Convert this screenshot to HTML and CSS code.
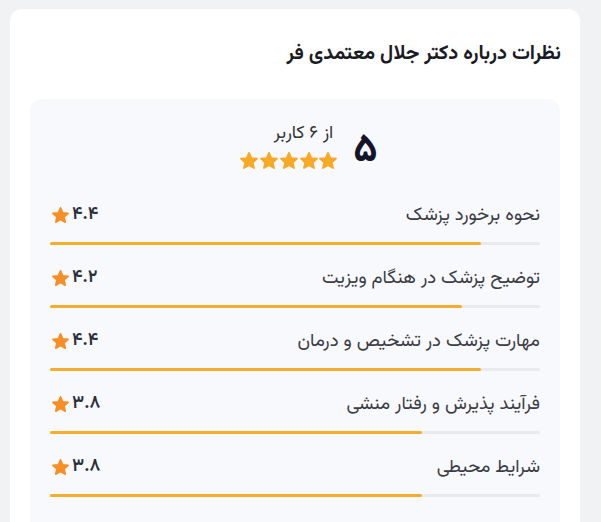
FILE: index.html
```html
<!DOCTYPE html>
<html lang="fa" dir="rtl">
<head>
    <meta charset="UTF-8">
    <title>نظرات</title>
    <link rel="stylesheet" href="styles.css">
</head>
<body>
<svg width="0" height="0" class="defs">
    <defs>
        <path id="star" d="M12 2.8l2.7 5.9 6.4.7-4.8 4.3 1.4 6.3L12 16.8 6.3 20l1.4-6.3-4.8-4.3 6.4-.7z"/>
    </defs>
</svg>
<div class="card">
    <h2 class="title">نظرات درباره دکتر جلال معتمدی فر</h2>
    <div class="panel">
        <div class="summary">
            <div class="score">۵</div>
            <div class="summary-info">
                <div class="count">از ۶ کاربر</div>
                <div class="stars">
                    <svg viewBox="1.8 1.8 20.4 20.4"><use href="#star"/></svg>
                    <svg viewBox="1.8 1.8 20.4 20.4"><use href="#star"/></svg>
                    <svg viewBox="1.8 1.8 20.4 20.4"><use href="#star"/></svg>
                    <svg viewBox="1.8 1.8 20.4 20.4"><use href="#star"/></svg>
                    <svg viewBox="1.8 1.8 20.4 20.4"><use href="#star"/></svg>
                </div>
            </div>
        </div>

        <div class="row">
            <div class="row-head">
                <span class="label">نحوه برخورد پزشک</span>
                <span class="value">۴.۴<svg viewBox="1.8 1.8 20.4 20.4"><use href="#star"/></svg></span>
            </div>
            <div class="track"><div class="fill" style="width: 88%"></div></div>
        </div>
        <div class="row">
            <div class="row-head">
                <span class="label">توضیح پزشک در هنگام ویزیت</span>
                <span class="value">۴.۲<svg viewBox="1.8 1.8 20.4 20.4"><use href="#star"/></svg></span>
            </div>
            <div class="track"><div class="fill" style="width: 84%"></div></div>
        </div>
        <div class="row">
            <div class="row-head">
                <span class="label">مهارت پزشک در تشخیص و درمان</span>
                <span class="value">۴.۴<svg viewBox="1.8 1.8 20.4 20.4"><use href="#star"/></svg></span>
            </div>
            <div class="track"><div class="fill" style="width: 88%"></div></div>
        </div>
        <div class="row">
            <div class="row-head">
                <span class="label">فرآیند پذیرش و رفتار منشی</span>
                <span class="value">۳.۸<svg viewBox="1.8 1.8 20.4 20.4"><use href="#star"/></svg></span>
            </div>
            <div class="track"><div class="fill" style="width: 76%"></div></div>
        </div>
        <div class="row">
            <div class="row-head">
                <span class="label">شرایط محیطی</span>
                <span class="value">۳.۸<svg viewBox="1.8 1.8 20.4 20.4"><use href="#star"/></svg></span>
            </div>
            <div class="track"><div class="fill" style="width: 76%"></div></div>
        </div>
    </div>
</div>
</body>
</html>
```

FILE: styles.css
```css
* {
    margin: 0;
    padding: 0;
    box-sizing: border-box;
}
body {
    background: #f1f2f4;
    font-family: "Vazirmatn", "Noto Sans Arabic", "DejaVu Sans", sans-serif;
    color: #333;
}
.defs {
    position: absolute;
}
.card {
    margin: 9px 21px 0 10px;
    padding: 30px 20px 40px;
    background: #fff;
    border-radius: 12px;
}
.title {
    font-size: 20px;
    font-weight: bold;
    line-height: 30px;
    color: #1b1b24;
    margin-right: -1px;
}
.panel {
    margin-top: 30px;
    padding: 22px 20px 40px;
    background: #f8f9fc;
    border-radius: 12px;
}
.summary {
    display: flex;
    justify-content: center;
    align-items: flex-start;
    gap: 16px;
    padding-left: 28px;
}
.score {
    margin-top: 10px;
    font-size: 40px;
    font-weight: bold;
    line-height: 40px;
    color: #15152a;
}
.summary-info {
    display: flex;
    flex-direction: column;
    align-items: flex-end;
}
.count {
    font-size: 18px;
    line-height: 26px;
    color: #333;
    align-self: flex-start;
    margin-right: 4px;
}
.stars {
    display: flex;
    gap: 1.75px;
    margin-top: 5px;
}
.stars svg {
    width: 18px;
    height: 18px;
    fill: #f7a928;
    stroke: #f7a928;
    stroke-width: 2;
    stroke-linejoin: round;
}
.row {
    margin-top: 32px;
}
.row + .row {
    margin-top: 21px;
}
.row-head {
    display: flex;
    justify-content: space-between;
    align-items: center;
    height: 24px;
}
.label {
    font-size: 18.5px;
    color: #3c3c46;
}
.value {
    display: flex;
    align-items: center;
    gap: 3px;
    font-size: 18px;
    font-weight: 600;
    color: #2b2f3a;
    margin-left: 2px;
}
.value svg {
    width: 17px;
    height: 17px;
    fill: #f78f27;
    stroke: #f78f27;
    stroke-width: 2;
    stroke-linejoin: round;
}
.track {
    direction: ltr;
    margin-top: 15px;
    height: 3px;
    background: #e8eaee;
    border-radius: 2px;
}
.fill {
    height: 100%;
    background: #f6ad2e;
    border-radius: 2px;
}
```
